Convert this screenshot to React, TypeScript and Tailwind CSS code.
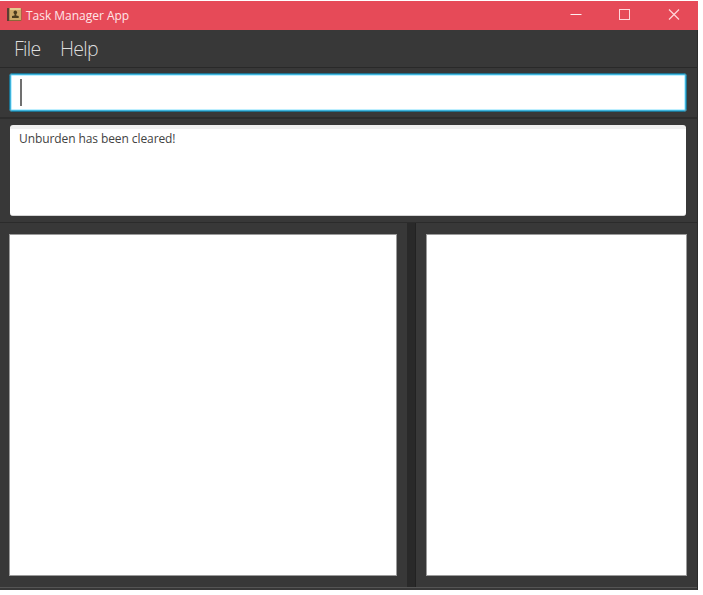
function BookIcon() {
  return (
    <svg width="15" height="15" viewBox="0 0 15 15" className="mb-0.5 block shrink-0">
      <rect x="0.5" y="1" width="14" height="13" rx="1" fill="#8a6838" />
      <rect x="2.5" y="1" width="11.5" height="12" fill="#cba968" />
      <rect x="3" y="1" width="10.5" height="2" fill="#e4cb90" />
      <rect x="0" y="1" width="2" height="13" rx="0.5" fill="#5c3d33" />
      <circle cx="8.3" cy="5.4" r="1.8" fill="#4b3c1e" />
      <path d="M7.5 6h1.8v2.4l2.4.7V11H5V9.1l2.5-.7Z" fill="#4b3c1e" />
    </svg>
  );
}

function TitleBar() {
  return (
    <header className="flex h-[29px] shrink-0 items-center bg-[#e64a58] pl-[7px] pr-[18px] text-[#ffe6e8]">
      <BookIcon />
      <h1 className="ml-1 whitespace-nowrap text-[12px] leading-4 tracking-[-0.02px]">Task Manager App</h1>
      <div className="ml-auto flex items-center">
        <svg width="110" height="13" viewBox="0 0 110 13" fill="none" stroke="#ffd6da" className="block">
          <path d="M0.5 5.5h11" stroke="#ffeff0" />
          <rect x="49.5" y="0.5" width="10" height="10" />
          <path d="M99 0.5l10 10M109 0.5l-10 10" strokeWidth="1.2" />
        </svg>
      </div>
    </header>
  );
}

export default function App() {
  return (
    <div className="h-[595px] w-[703px] overflow-hidden bg-white pt-px font-['Open_Sans','Noto_Sans',sans-serif]">
      <div className="flex h-[589px] w-[698px] flex-col bg-[#383838]">
        <TitleBar />
        <div className="flex min-h-0 grow flex-col border-r border-[#2b2b2b]">
          <nav className="flex h-[38px] shrink-0 items-start border-b border-[#292929] pl-[14px] pt-[5px] text-[19.5px] font-light leading-[28px] tracking-[-0.7px] text-[#dedede]">
            <span className="w-[46px]">File</span>
            <span>Help</span>
          </nav>
          <section className="h-[51px] shrink-0 border-b-2 border-[#2d2d2d] pl-[9px] pr-[10px] pt-[5px]">
            <div className="flex h-[39px] items-center rounded-[3px] border border-[#1f7390] bg-white pl-[10px] shadow-[inset_0_0_0_1px_#3fb4dc,inset_0_0_0_2px_#bdefff]">
              <span className="h-[27px] w-[2px] bg-[#707070]" />
            </div>
          </section>
          <section className="h-[104px] shrink-0 border-b border-[#2b2b2b] pl-[10px] pr-[11px] pt-[6px]">
            <div className="h-[91px] rounded-[3px] border-b border-t-4 border-b-[#d5d5d5] border-t-[#f0f0f0] bg-white pl-[9px] pt-px">
              <p className="text-[12px] leading-[18px] tracking-[-0.09px] text-[#424242]">Unburden has been cleared!</p>
            </div>
          </section>
          <main className="flex h-[364px] shrink-0">
            <section className="w-[407px] pl-[9px] pr-[10px] pt-[11px]">
              <div className="h-[342px] border border-[#9b9b9b] bg-white" />
            </section>
            <div className="w-[9px] border-r border-[#222222] bg-[#292929]" />
            <section className="grow pl-[10px] pr-[10px] pt-[11px]">
              <div className="h-[342px] border border-[#9b9b9b] bg-white" />
            </section>
          </main>
          <footer className="grow border-t border-[#555555]" />
        </div>
      </div>
    </div>
  );
}
